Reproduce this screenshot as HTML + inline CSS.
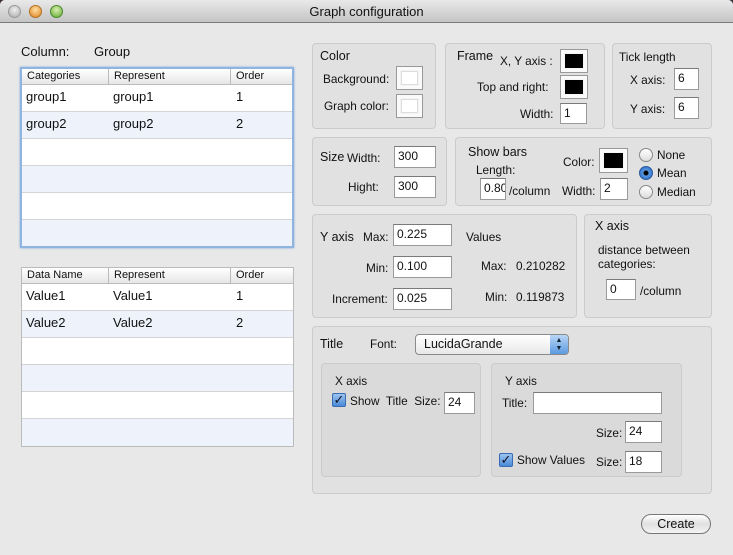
<!DOCTYPE html>
<html><head><style>
*{box-sizing:border-box;margin:0;padding:0}
body{width:733px;height:555px;overflow:hidden;background:#3a2f36;font-family:"Liberation Sans",sans-serif;font-size:11.8px;color:#111;position:relative}
.win{position:absolute;left:0;top:0;width:733px;height:555px;background:#e8e8e8;border-radius:5px 5px 0 0;overflow:hidden}
.tb{position:absolute;left:0;top:0;width:733px;height:23px;background:linear-gradient(#e9e9e9,#c4c4c4);border-bottom:1px solid #7a7a7a;text-align:center;font-size:13px;line-height:23px}
.dot{position:absolute;top:5px;width:13px;height:13px;border-radius:50%}
.a{position:absolute;white-space:nowrap}
.box{position:absolute;background:#e1e1e1;border:1px solid #cbcbcb;border-radius:4px}
.f{position:absolute;background:#fff;border:1px solid #9a9a9a;border-top-color:#7a7a7a;font-size:12px;padding:2px 0 0 3px}
.sw{position:absolute;border:1px solid #999;background:#f4f4f4;box-shadow:inset 0 0 0 3px #fafafa}
.sw i{position:absolute;left:4px;top:4px;right:4px;bottom:4px;background:#000}
.sw.w i{background:#fff;border:1px solid #ddd}
.tbl{position:absolute;background:#fff;border:1px solid #bbb}
.th{position:absolute;left:0;right:0;top:0;height:16px;background:linear-gradient(#fff,#e6e6e6);border-bottom:1px solid #bbb;font-size:11px;line-height:15px}
.th span{position:absolute;top:0;padding-left:5px;border-right:1px solid #bbb;height:16px}
.row{position:absolute;left:0;right:0;height:27px;border-bottom:1px solid #d4d4d4;font-size:13px;line-height:24px}
.row span{position:absolute;top:0}
.alt{background:#eef3fb}
.rad{position:absolute;width:14px;height:14px;border-radius:50%;border:1px solid #888;background:linear-gradient(#fff,#ddd)}
.rad.on{background:radial-gradient(circle,#000 0 2px,#5a9ae0 3px,#2a6cc8 7px);border-color:#2c5a9a}
.cb{position:absolute;width:14px;height:14px;border:1px solid #3a6ab0;border-radius:2px;background:linear-gradient(#9cc4f0,#4a8ad8);color:#112;font-size:13px;line-height:12px;text-align:center}
</style></head><body>
<div class="win">
<div class="tb">Graph configuration
<div class="dot" style="left:8px;background:radial-gradient(circle at 50% 35%,#eee,#aaa);border:1px solid #999"></div>
<div class="dot" style="left:29px;background:radial-gradient(circle at 50% 35%,#fde0a0,#e08020);border:1px solid #b07020"></div>
<div class="dot" style="left:50px;background:radial-gradient(circle at 50% 35%,#d8f0b0,#60a830);border:1px solid #4a8a2a"></div>
</div>

<div class="a" style="left:21px;top:44px;font-size:13px">Column:</div>
<div class="a" style="left:94px;top:44px;font-size:13px">Group</div>

<div class="tbl" style="left:20px;top:67px;width:274px;height:181px;border:2px solid #8fb4e0;box-shadow:0 0 2px #7aa6dc">
<div class="th"><span style="left:0;width:87px">Categories</span><span style="left:87px;width:122px">Represent</span><span style="left:209px;width:63px;border:0">Order</span></div>
<div class="row" style="top:16px"><span style="left:4px">group1</span><span style="left:91px">group1</span><span style="left:214px">1</span></div>
<div class="row alt" style="top:43px"><span style="left:4px">group2</span><span style="left:91px">group2</span><span style="left:214px">2</span></div>
<div class="row" style="top:70px"></div>
<div class="row alt" style="top:97px"></div>
<div class="row" style="top:124px"></div>
<div class="row alt" style="top:151px;height:26px;border:0"></div>
</div>

<div class="tbl" style="left:21px;top:267px;width:273px;height:180px">
<div class="th"><span style="left:0;width:87px">Data Name</span><span style="left:87px;width:122px">Represent</span><span style="left:209px;width:63px;border:0">Order</span></div>
<div class="row" style="top:16px"><span style="left:4px">Value1</span><span style="left:91px">Value1</span><span style="left:214px">1</span></div>
<div class="row alt" style="top:43px"><span style="left:4px">Value2</span><span style="left:91px">Value2</span><span style="left:214px">2</span></div>
<div class="row" style="top:70px"></div>
<div class="row alt" style="top:97px"></div>
<div class="row" style="top:124px"></div>
<div class="row alt" style="top:151px;height:27px;border:0"></div>
</div>

<!-- Color -->
<div class="box" style="left:312px;top:43px;width:124px;height:86px"></div>
<div class="a" style="left:320px;top:49px;font-size:12.5px">Color</div>
<div class="a" style="left:323px;top:72px">Background:</div>
<div class="sw w" style="left:396px;top:66px;width:27px;height:24px"><i></i></div>
<div class="a" style="left:324px;top:99px">Graph color:</div>
<div class="sw w" style="left:396px;top:94px;width:27px;height:24px"><i></i></div>

<!-- Frame -->
<div class="box" style="left:445px;top:43px;width:160px;height:86px"></div>
<div class="a" style="left:457px;top:49px;font-size:12.5px">Frame</div>
<div class="a" style="left:500px;top:54px">X, Y axis :</div>
<div class="sw" style="left:560px;top:49px;width:28px;height:24px"><i></i></div>
<div class="a" style="left:477px;top:80px">Top and right:</div>
<div class="sw" style="left:560px;top:75px;width:28px;height:24px"><i></i></div>
<div class="a" style="left:520px;top:107px">Width:</div>
<div class="f" style="left:560px;top:103px;width:27px;height:21px">1</div>

<!-- Tick -->
<div class="box" style="left:612px;top:43px;width:100px;height:86px"></div>
<div class="a" style="left:619px;top:50px">Tick length</div>
<div class="a" style="left:630px;top:73px">X axis:</div>
<div class="f" style="left:674px;top:68px;width:25px;height:22px">6</div>
<div class="a" style="left:630px;top:102px">Y axis:</div>
<div class="f" style="left:674px;top:97px;width:25px;height:22px">6</div>

<!-- Size -->
<div class="box" style="left:312px;top:137px;width:135px;height:69px"></div>
<div class="a" style="left:320px;top:150px;font-size:12.5px">Size</div>
<div class="a" style="left:347px;top:151px">Width:</div>
<div class="f" style="left:394px;top:146px;width:42px;height:22px">300</div>
<div class="a" style="left:348px;top:180px">Hight:</div>
<div class="f" style="left:394px;top:176px;width:42px;height:22px">300</div>

<!-- Show bars -->
<div class="box" style="left:455px;top:137px;width:257px;height:69px"></div>
<div class="a" style="left:468px;top:145px;font-size:12.5px">Show bars</div>
<div class="a" style="left:476px;top:163px">Length:</div>
<div class="f" style="left:480px;top:178px;width:26px;height:22px;overflow:hidden">0.80</div>
<div class="a" style="left:509px;top:184px">/column</div>
<div class="a" style="left:563px;top:155px">Color:</div>
<div class="sw" style="left:599px;top:148px;width:29px;height:25px"><i></i></div>
<div class="a" style="left:562px;top:184px">Width:</div>
<div class="f" style="left:600px;top:178px;width:28px;height:22px">2</div>
<div class="rad" style="left:639px;top:148px"></div><div class="a" style="left:657px;top:148px">None</div>
<div class="rad on" style="left:639px;top:166px"></div><div class="a" style="left:657px;top:166px">Mean</div>
<div class="rad" style="left:639px;top:185px"></div><div class="a" style="left:657px;top:185px">Median</div>

<!-- Y axis -->
<div class="box" style="left:312px;top:214px;width:265px;height:104px"></div>
<div class="a" style="left:320px;top:230px;font-size:12.5px">Y axis</div>
<div class="a" style="left:363px;top:230px">Max:</div>
<div class="f" style="left:393px;top:224px;width:59px;height:22px">0.225</div>
<div class="a" style="left:466px;top:230px">Values</div>
<div class="a" style="left:366px;top:261px">Min:</div>
<div class="f" style="left:393px;top:256px;width:59px;height:22px">0.100</div>
<div class="a" style="left:481px;top:259px">Max:</div>
<div class="a" style="left:516px;top:259px">0.210282</div>
<div class="a" style="left:332px;top:292px">Increment:</div>
<div class="f" style="left:393px;top:288px;width:59px;height:22px">0.025</div>
<div class="a" style="left:485px;top:290px">Min:</div>
<div class="a" style="left:516px;top:290px">0.119873</div>

<!-- X axis -->
<div class="box" style="left:584px;top:214px;width:128px;height:104px"></div>
<div class="a" style="left:595px;top:219px;font-size:12.5px">X axis</div>
<div class="a" style="left:598px;top:243px">distance between</div>
<div class="a" style="left:598px;top:257px">categories:</div>
<div class="f" style="left:606px;top:279px;width:30px;height:21px">0</div>
<div class="a" style="left:640px;top:284px">/column</div>

<!-- Title -->
<div class="box" style="left:312px;top:326px;width:400px;height:168px"></div>
<div class="a" style="left:320px;top:337px;font-size:12.5px">Title</div>
<div class="a" style="left:370px;top:337px">Font:</div>
<div class="a" style="left:415px;top:334px;width:154px;height:21px;border:1px solid #8a8a8a;border-radius:4px;background:linear-gradient(#fff,#e8e8e8);font-size:12.5px;line-height:19px;padding-left:8px">LucidaGrande
<div style="position:absolute;right:0;top:0;width:18px;height:19px;border-radius:0 3px 3px 0;background:linear-gradient(#b8d6f6,#5c9ae0);color:#123;font-size:7px;line-height:8px;text-align:center;padding-top:2px">▲<br>▼</div></div>

<div class="box" style="left:321px;top:363px;width:160px;height:114px;background:#dadada"></div>
<div class="a" style="left:335px;top:374px">X axis</div>
<div class="cb" style="left:332px;top:393px">✓</div>
<div class="a" style="left:350px;top:394px">Show&nbsp; Title&nbsp; Size:</div>
<div class="f" style="left:444px;top:392px;width:31px;height:22px">24</div>

<div class="box" style="left:491px;top:363px;width:191px;height:114px;background:#dadada"></div>
<div class="a" style="left:505px;top:374px">Y axis</div>
<div class="a" style="left:502px;top:396px">Title:</div>
<div class="f" style="left:533px;top:392px;width:129px;height:22px"></div>
<div class="a" style="left:596px;top:426px">Size:</div>
<div class="f" style="left:625px;top:421px;width:37px;height:22px">24</div>
<div class="cb" style="left:499px;top:453px">✓</div>
<div class="a" style="left:517px;top:453px">Show Values</div>
<div class="a" style="left:596px;top:455px">Size:</div>
<div class="f" style="left:625px;top:451px;width:37px;height:22px">18</div>

<div class="a" style="left:641px;top:514px;width:70px;height:20px;border:1px solid #777;border-radius:10px;background:linear-gradient(#fff,#e0e0e0 50%,#f4f4f4);text-align:center;font-size:12.5px;line-height:18px">Create</div>
</div>
</body></html>
